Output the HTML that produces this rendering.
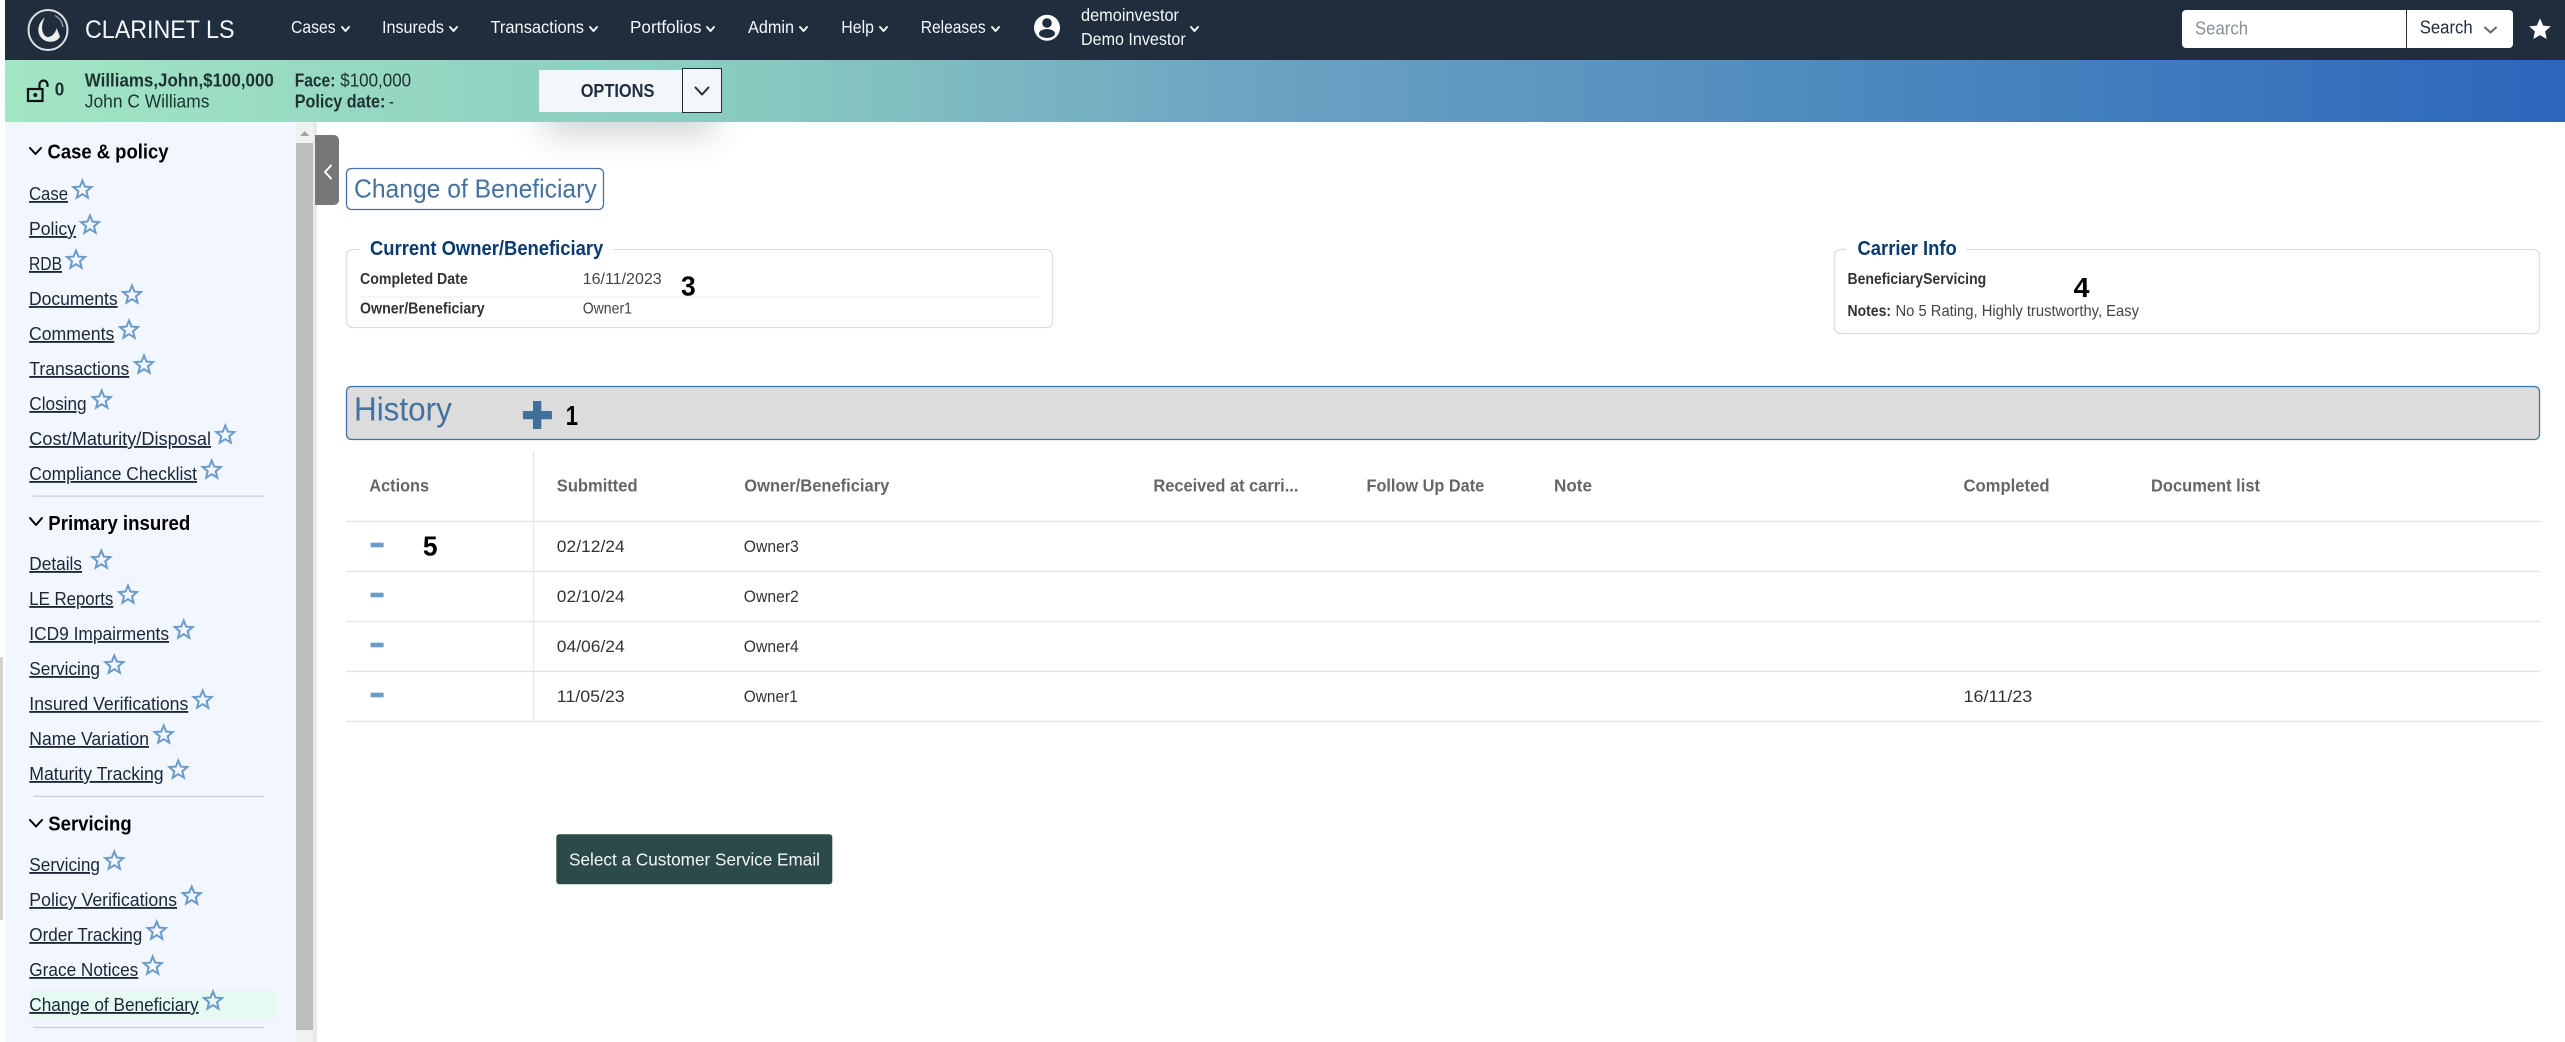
<!DOCTYPE html>
<html lang="en">
<head>
<meta charset="utf-8">
<title>Change of Beneficiary - Clarinet LS</title>
<style>
html,body{margin:0;padding:0;background:#fff;width:2565px;height:1042px;overflow:hidden}
svg{display:block}
text{font-family:"Liberation Sans",Arial,sans-serif;white-space:pre}
.nav{font-size:17.5px;fill:#f4f7fa}
.bar{font-size:18px;fill:#1f3232}
.b{font-weight:700}
.hd{font-size:20px;font-weight:700;fill:#000}
.lk{font-size:18.5px;fill:#1a2738;text-decoration:underline}
.lg{font-size:20.5px;font-weight:700;fill:#0b3a70}
.fb{font-size:16px;font-weight:700;fill:#333}
.fv{font-size:16px;fill:#444}
.th{font-size:17.5px;font-weight:700;fill:#666}
.td{font-size:16.5px;fill:#333}
.num{font-size:28px;font-weight:700;fill:#000}
.ch{fill:none;stroke-width:2;stroke-linecap:round;stroke-linejoin:round}
</style>
</head>
<body>
<svg xmlns="http://www.w3.org/2000/svg" width="2565" height="1042" viewBox="0 0 2565 1042">
<defs>
<linearGradient id="g" x1="0" y1="0" x2="1" y2="0">
<stop offset="0" stop-color="#a2e6c4"/>
<stop offset=".3" stop-color="#88c9c0"/>
<stop offset=".49" stop-color="#6ba3c2"/>
<stop offset=".8" stop-color="#4380bd"/>
<stop offset="1" stop-color="#2c66bc"/>
</linearGradient>
<filter id="sh" x="-50%" y="-150%" width="200%" height="400%"><feGaussianBlur stdDeviation="18"/></filter>
<path id="s" d="M0-9.500L2.500-3.400L9-2.900L4 1.300L5.600 7.700L0 4.200L-5.600 7.700L-4 1.300L-9-2.900L-2.500-3.400Z" fill="none" stroke="#6b9bc9" stroke-width="2" stroke-linejoin="miter"/>
</defs>

<rect width="2565" height="1042" fill="#fff"/>
<rect x="0" y="657" width="3" height="263" fill="#d4d4cc"/>

<!-- options shadow (below the gradient bar) -->
<rect x="545" y="90" width="170" height="42" fill="#000" opacity=".2" filter="url(#sh)"/>

<!-- top nav -->
<rect x="5" y="0" width="2560" height="60" fill="#1f2d3c"/>
<g fill="none" stroke="#fff">
<ellipse cx="48" cy="30" rx="19.500" ry="20" stroke-width="2" stroke-opacity=".85"/>
<path d="M55 15.500A15.500 15.500 0 0 1 63 27" stroke-width="1.200" stroke-opacity=".6"/>
<path d="M45 17.500C36 24 36 37 46 41C52 43 58 41 60 36.500L56.500 28C55.500 34 50 38.500 46 36.500C41 33 41 24 45 17.500Z" fill="#fff" fill-opacity=".92" stroke="none"/>
</g>
<text x="85" y="38" class="nav" style="font-size:25px" textLength="149.500" lengthAdjust="spacingAndGlyphs">CLARINET LS</text>
<text x="291" y="33" class="nav" textLength="44.600" lengthAdjust="spacingAndGlyphs">Cases</text>
<path class="ch" stroke="#f4f7fa" d="M342 27l3.500 4 3.500-4"/>
<text x="382" y="33" class="nav" textLength="62" lengthAdjust="spacingAndGlyphs">Insureds</text>
<path class="ch" stroke="#f4f7fa" d="M450 27l3.500 4 3.500-4"/>
<text x="490.500" y="33" class="nav" textLength="93.500" lengthAdjust="spacingAndGlyphs">Transactions</text>
<path class="ch" stroke="#f4f7fa" d="M590 27l3.500 4 3.500-4"/>
<text x="630" y="33" class="nav" textLength="71.400" lengthAdjust="spacingAndGlyphs">Portfolios</text>
<path class="ch" stroke="#f4f7fa" d="M707 27l3.500 4 3.500-4"/>
<text x="748" y="33" class="nav" textLength="46" lengthAdjust="spacingAndGlyphs">Admin</text>
<path class="ch" stroke="#f4f7fa" d="M800 27l3.500 4 3.500-4"/>
<text x="841.300" y="33" class="nav" textLength="32.700" lengthAdjust="spacingAndGlyphs">Help</text>
<path class="ch" stroke="#f4f7fa" d="M880 27l3.500 4 3.500-4"/>
<text x="920.700" y="33" class="nav" textLength="65" lengthAdjust="spacingAndGlyphs">Releases</text>
<path class="ch" stroke="#f4f7fa" d="M992 27l3.500 4 3.500-4"/>
<circle cx="1047" cy="27.700" r="13" fill="#fff"/>
<circle cx="1047" cy="23" r="4.800" fill="#1f2d3c"/>
<ellipse cx="1047" cy="33.500" rx="8" ry="4.500" fill="#1f2d3c"/>
<text x="1081" y="21" class="nav" textLength="98" lengthAdjust="spacingAndGlyphs">demoinvestor</text>
<text x="1081" y="45" class="nav" textLength="104.700" lengthAdjust="spacingAndGlyphs">Demo Investor</text>
<path class="ch" stroke="#f4f7fa" d="M1191 27l3.500 4 3.500-4"/>
<path d="M2186 10H2406V48H2186a4 4 0 0 1-4-4V14a4 4 0 0 1 4-4Z" fill="#fff"/>
<path d="M2407 10H2509a4 4 0 0 1 4 4V44a4 4 0 0 1-4 4H2407Z" fill="#fff"/>
<text x="2195" y="34.500" style="font-size:18.500px;fill:#868e96" textLength="53" lengthAdjust="spacingAndGlyphs">Search</text>
<text x="2419.700" y="33.700" style="font-size:18.500px;fill:#1f2d3c" textLength="53" lengthAdjust="spacingAndGlyphs">Search</text>
<path class="ch" stroke="#666" d="M2485 27.500l5.500 5 5.500-5"/>
<path d="M2540 18.500l3.200 7.100 7.600.8-5.700 5.100 1.600 7.500-6.700-3.900-6.700 3.900 1.600-7.500-5.700-5.100 7.600-.8Z" fill="#fff"/>

<!-- gradient bar -->
<rect x="5" y="60" width="2560" height="62" fill="url(#g)"/>
<g fill="none" stroke="#111" stroke-width="2.200">
<rect x="28" y="89" width="14.500" height="12"/>
<path d="M39.500 88v-3.500a4 4 0 0 1 8 0v2.500"/>
</g>
<circle cx="35.300" cy="95" r="2" fill="#111"/>
<text x="54.800" y="95.700" class="bar b" textLength="9.500" lengthAdjust="spacingAndGlyphs">0</text>
<text x="84.800" y="86.700" class="bar b" textLength="189" lengthAdjust="spacingAndGlyphs">Williams,John,$100,000</text>
<text x="84.800" y="107.700" class="bar" textLength="124.600" lengthAdjust="spacingAndGlyphs">John C Williams</text>
<text x="294.700" y="86.700" class="bar b" textLength="40.700" lengthAdjust="spacingAndGlyphs">Face:</text>
<text x="340.300" y="86.700" class="bar" textLength="70.800" lengthAdjust="spacingAndGlyphs">$100,000</text>
<text x="294.700" y="107.700" class="bar b" textLength="90.700" lengthAdjust="spacingAndGlyphs">Policy date:</text>
<text x="389" y="107.700" class="bar" textLength="5" lengthAdjust="spacingAndGlyphs">-</text>

<!-- options -->
<rect x="539" y="70" width="144" height="42" fill="#f3f7fb"/>
<rect x="682.500" y="68.500" width="39" height="44" fill="#f3f7fb" stroke="#1f2d3c"/>
<text x="580.700" y="97" style="font-size:18px;font-weight:700;fill:#1f2d3c" textLength="73.700" lengthAdjust="spacingAndGlyphs">OPTIONS</text>
<path class="ch" stroke="#1f2d3c" stroke-width="2.200" d="M695.500 87.500l6.500 7 6.500-7"/>

<!-- sidebar -->
<rect x="5" y="122" width="291" height="920" fill="#f2f6fe"/>
<rect x="296" y="122" width="17" height="920" fill="#f1f1f1"/>
<rect x="296" y="143" width="17" height="887" fill="#bdbdbd"/>
<path d="M300 136h9.500l-4.750-5Z" fill="#a3a3a3"/>
<rect x="313" y="122" width="4" height="920" fill="#e9e9e9"/>
<path d="M315 135h19a5 5 0 0 1 5 5v60a5 5 0 0 1-5 5h-19Z" fill="#777"/>
<path class="ch" stroke="#fff" stroke-width="3" d="M331 165.500l-6 6.500 6 6.500"/>

<path class="ch" stroke="#000" stroke-width="2.400" d="M30 148l5.500 6 5.500-6"/>
<text x="47.500" y="158.300" class="hd" textLength="121" lengthAdjust="spacingAndGlyphs">Case &amp; policy</text>
<text x="29" y="200" class="lk" textLength="39" lengthAdjust="spacingAndGlyphs">Case</text><use href="#s" x="82.400" y="190"/>
<text x="29" y="235" class="lk" textLength="47" lengthAdjust="spacingAndGlyphs">Policy</text><use href="#s" x="90" y="225"/>
<text x="29" y="270" class="lk" textLength="33" lengthAdjust="spacingAndGlyphs">RDB</text><use href="#s" x="76" y="260"/>
<text x="29" y="305" class="lk" textLength="88.700" lengthAdjust="spacingAndGlyphs">Documents</text><use href="#s" x="132" y="295"/>
<text x="29" y="340" class="lk" textLength="85.300" lengthAdjust="spacingAndGlyphs">Comments</text><use href="#s" x="129" y="330"/>
<text x="29.300" y="375" class="lk" textLength="100" lengthAdjust="spacingAndGlyphs">Transactions</text><use href="#s" x="144" y="365"/>
<text x="29.300" y="410" class="lk" textLength="57.300" lengthAdjust="spacingAndGlyphs">Closing</text><use href="#s" x="101.700" y="400"/>
<text x="29.300" y="445" class="lk" textLength="181.700" lengthAdjust="spacingAndGlyphs">Cost/Maturity/Disposal</text><use href="#s" x="225.300" y="435"/>
<text x="29.300" y="480" class="lk" textLength="167.700" lengthAdjust="spacingAndGlyphs">Compliance Checklist</text><use href="#s" x="211.700" y="470"/>
<rect x="33" y="495.500" width="231" height="1.200" fill="#c8ccd8"/>

<path class="ch" stroke="#000" stroke-width="2.400" d="M30 518l6 7 6-7"/>
<text x="48.300" y="530" class="hd" textLength="142" lengthAdjust="spacingAndGlyphs">Primary insured</text>
<text x="29.300" y="570" class="lk" textLength="52.700" lengthAdjust="spacingAndGlyphs">Details</text><use href="#s" x="101.300" y="560"/>
<text x="29.300" y="605" class="lk" textLength="84" lengthAdjust="spacingAndGlyphs">LE Reports</text><use href="#s" x="128" y="595"/>
<text x="29.300" y="640" class="lk" textLength="139.700" lengthAdjust="spacingAndGlyphs">ICD9 Impairments</text><use href="#s" x="183.700" y="630"/>
<text x="29.300" y="675" class="lk" textLength="70.700" lengthAdjust="spacingAndGlyphs">Servicing</text><use href="#s" x="114.300" y="665"/>
<text x="29.300" y="710" class="lk" textLength="159" lengthAdjust="spacingAndGlyphs">Insured Verifications</text><use href="#s" x="202.700" y="700"/>
<text x="29.300" y="745" class="lk" textLength="119.700" lengthAdjust="spacingAndGlyphs">Name Variation</text><use href="#s" x="163.700" y="735"/>
<text x="29.300" y="780" class="lk" textLength="134.300" lengthAdjust="spacingAndGlyphs">Maturity Tracking</text><use href="#s" x="178.300" y="770"/>
<rect x="33" y="795.800" width="231" height="1.200" fill="#c8ccd8"/>

<path class="ch" stroke="#000" stroke-width="2.400" d="M30 820l6 6.500 6-6.500"/>
<text x="48.300" y="830.700" class="hd" textLength="83.400" lengthAdjust="spacingAndGlyphs">Servicing</text>
<text x="29.300" y="871" class="lk" textLength="70.700" lengthAdjust="spacingAndGlyphs">Servicing</text><use href="#s" x="114.300" y="861"/>
<text x="29.300" y="906" class="lk" textLength="147.700" lengthAdjust="spacingAndGlyphs">Policy Verifications</text><use href="#s" x="191.700" y="896"/>
<text x="29.300" y="941" class="lk" textLength="113" lengthAdjust="spacingAndGlyphs">Order Tracking</text><use href="#s" x="156.700" y="931"/>
<text x="29.300" y="976" class="lk" textLength="109" lengthAdjust="spacingAndGlyphs">Grace Notices</text><use href="#s" x="152.700" y="966"/>
<rect x="29" y="990.700" width="247" height="27.500" fill="#e6faf1"/>
<text x="29.300" y="1011" class="lk" textLength="169.300" lengthAdjust="spacingAndGlyphs">Change of Beneficiary</text><use href="#s" x="213" y="1001"/>
<rect x="33" y="1026.800" width="231" height="1.200" fill="#c8ccd8"/>

<!-- title -->
<rect x="346.500" y="168.500" width="257" height="41" rx="5" fill="#fff" stroke="#44719e" stroke-width="1.300"/>
<text x="354" y="197.300" style="font-size:26px;fill:#44719e" textLength="242.700" lengthAdjust="spacingAndGlyphs">Change of Beneficiary</text>

<!-- current owner fieldset -->
<rect x="346.500" y="249.500" width="706" height="78" rx="6" fill="#fff" stroke="#dedede" stroke-width="1.300"/>
<rect x="360" y="245" width="253" height="10" fill="#fff"/>
<text x="370" y="255" class="lg" textLength="233.300" lengthAdjust="spacingAndGlyphs">Current Owner/Beneficiary</text>
<text x="360" y="284" class="fb" textLength="107.700" lengthAdjust="spacingAndGlyphs">Completed Date</text>
<text x="582.700" y="284" class="fv" textLength="79" lengthAdjust="spacingAndGlyphs">16/11/2023</text>
<rect x="360" y="296.500" width="680" height="1" fill="#eee"/>
<text x="360" y="313.300" class="fb" textLength="124.700" lengthAdjust="spacingAndGlyphs">Owner/Beneficiary</text>
<text x="582.700" y="313.300" class="fv" textLength="49.300" lengthAdjust="spacingAndGlyphs">Owner1</text>
<text x="681" y="295.300" class="num" textLength="14.700" lengthAdjust="spacingAndGlyphs">3</text>

<!-- carrier fieldset -->
<rect x="1834.500" y="249.500" width="705" height="84" rx="6" fill="#fff" stroke="#dedede" stroke-width="1.300"/>
<rect x="1846.500" y="245" width="120" height="10" fill="#fff"/>
<text x="1857.500" y="255" class="lg" textLength="99.300" lengthAdjust="spacingAndGlyphs">Carrier Info</text>
<text x="1847.500" y="284" class="fb" textLength="138.700" lengthAdjust="spacingAndGlyphs">BeneficiaryServicing</text>
<text x="2073.500" y="297" class="num" textLength="16" lengthAdjust="spacingAndGlyphs">4</text>
<text x="1847.500" y="316" class="fb" textLength="43.500" lengthAdjust="spacingAndGlyphs">Notes:</text>
<text x="1895.500" y="316" class="fv" textLength="243.500" lengthAdjust="spacingAndGlyphs">No 5 Rating, Highly trustworthy, Easy</text>

<!-- history -->
<rect x="346.500" y="386.500" width="2193" height="53" rx="5" fill="#dcdcdc" stroke="#44719e" stroke-width="1.300"/>
<text x="354" y="420.700" style="font-size:33px;fill:#44719e" textLength="97.800" lengthAdjust="spacingAndGlyphs">History</text>
<path d="M533 401h8.300v10h10.600v8.300h-10.600V429H533v-9.700h-10.100V411H533Z" fill="#3f6f9b"/>
<text x="565.700" y="425" class="num" textLength="12.300" lengthAdjust="spacingAndGlyphs">1</text>

<!-- table -->
<rect x="533" y="451" width="1" height="269" fill="#e5e5e5"/>
<rect x="346" y="520.800" width="2194" height="1.300" fill="#e3e3e3"/>
<rect x="346" y="570.800" width="2194" height="1.300" fill="#e3e3e3"/>
<rect x="346" y="620.800" width="2194" height="1.300" fill="#e3e3e3"/>
<rect x="346" y="670.800" width="2194" height="1.300" fill="#e3e3e3"/>
<rect x="346" y="720.800" width="2194" height="1.300" fill="#e3e3e3"/>
<text x="369.300" y="491.700" class="th" textLength="59.800" lengthAdjust="spacingAndGlyphs">Actions</text>
<text x="556.800" y="491.700" class="th" textLength="80.800" lengthAdjust="spacingAndGlyphs">Submitted</text>
<text x="744.300" y="491.700" class="th" textLength="145" lengthAdjust="spacingAndGlyphs">Owner/Beneficiary</text>
<text x="1153.400" y="491.700" class="th" textLength="145" lengthAdjust="spacingAndGlyphs">Received at carri...</text>
<text x="1366.500" y="491.700" class="th" textLength="117.700" lengthAdjust="spacingAndGlyphs">Follow Up Date</text>
<text x="1554" y="491.700" class="th" textLength="38" lengthAdjust="spacingAndGlyphs">Note</text>
<text x="1963.500" y="491.700" class="th" textLength="86" lengthAdjust="spacingAndGlyphs">Completed</text>
<text x="2151" y="491.700" class="th" textLength="109" lengthAdjust="spacingAndGlyphs">Document list</text>

<rect x="370.600" y="542.700" width="13" height="4.600" fill="#6a9bc9"/>
<rect x="370.600" y="592.700" width="13" height="4.600" fill="#6a9bc9"/>
<rect x="370.600" y="642.700" width="13" height="4.600" fill="#6a9bc9"/>
<rect x="370.600" y="692.700" width="13" height="4.600" fill="#6a9bc9"/>
<text x="422.900" y="555.700" class="num" textLength="14.700" lengthAdjust="spacingAndGlyphs">5</text>

<text x="556.800" y="552" class="td" textLength="67.900" lengthAdjust="spacingAndGlyphs">02/12/24</text>
<text x="743.800" y="552" class="td" textLength="55" lengthAdjust="spacingAndGlyphs">Owner3</text>
<text x="556.800" y="602" class="td" textLength="67.900" lengthAdjust="spacingAndGlyphs">02/10/24</text>
<text x="743.800" y="602" class="td" textLength="55" lengthAdjust="spacingAndGlyphs">Owner2</text>
<text x="556.800" y="652" class="td" textLength="67.900" lengthAdjust="spacingAndGlyphs">04/06/24</text>
<text x="743.800" y="652" class="td" textLength="55" lengthAdjust="spacingAndGlyphs">Owner4</text>
<text x="556.800" y="702" class="td" textLength="67.900" lengthAdjust="spacingAndGlyphs">11/05/23</text>
<text x="743.800" y="702" class="td" textLength="54" lengthAdjust="spacingAndGlyphs">Owner1</text>
<text x="1963.500" y="702" class="td" textLength="68.800" lengthAdjust="spacingAndGlyphs">16/11/23</text>

<!-- button -->
<rect x="556.300" y="834.300" width="276" height="50" rx="3" fill="#2d4a4a"/>
<text x="569" y="865.700" style="font-size:17.500px;fill:#f3f6f6" textLength="251" lengthAdjust="spacingAndGlyphs">Select a Customer Service Email</text>
</svg>
</body>
</html>
